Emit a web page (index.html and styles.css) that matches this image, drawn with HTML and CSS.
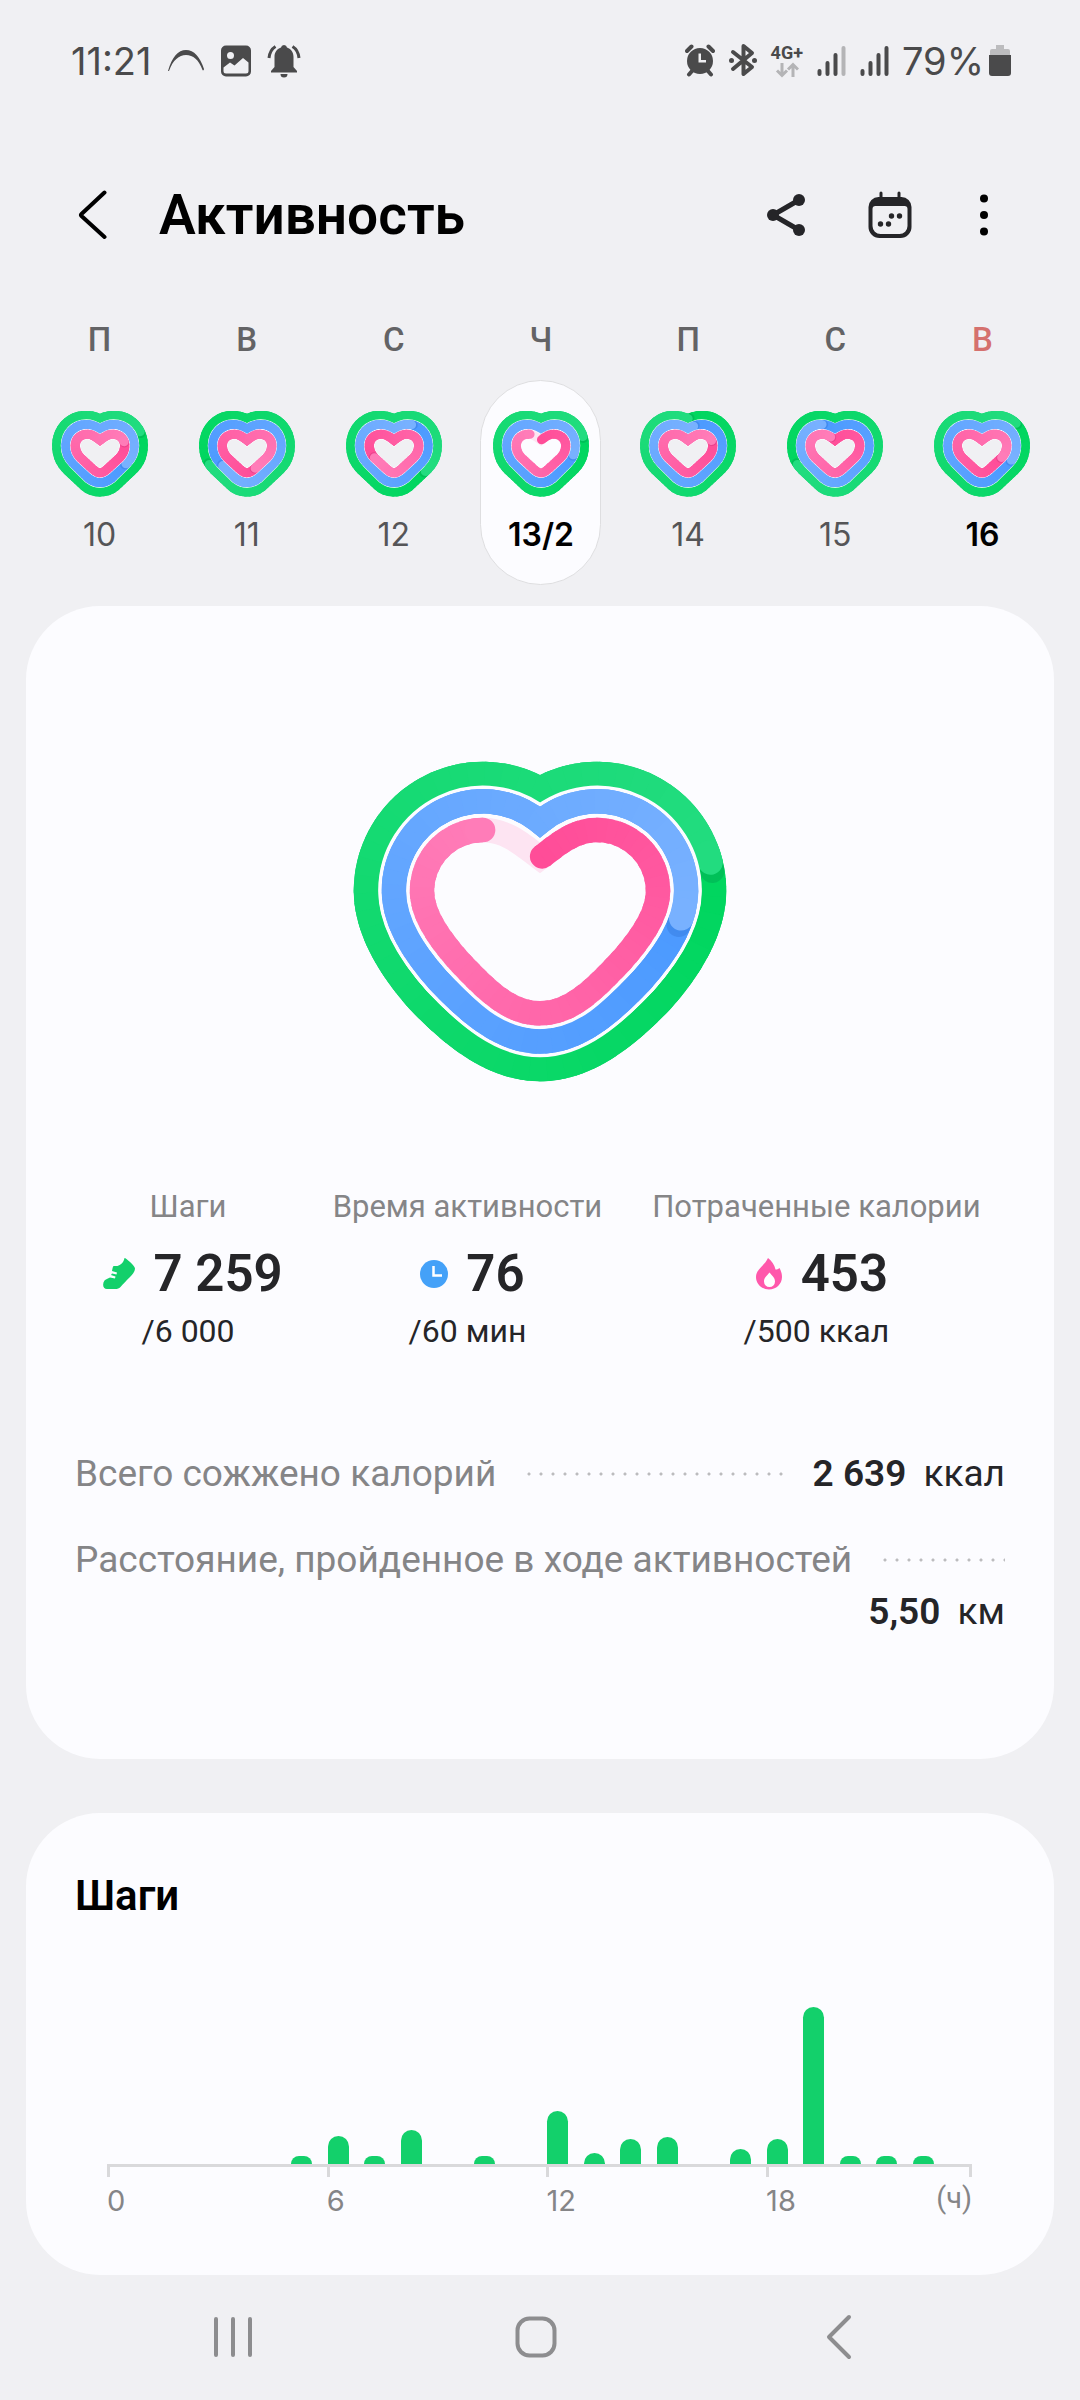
FILE: index.html
```html
<!DOCTYPE html>
<html lang="ru">
<head>
<meta charset="utf-8">
<meta name="viewport" content="width=device-width, initial-scale=1">
<title>Активность</title>
<link rel="stylesheet" href="styles.css">
</head>
<body>

<div class="status">
  <div class="status-group status-left">
    <time class="status-text">11:21</time>
    <svg width="38" height="36" viewBox="0 0 38 36" aria-hidden="true"><path d="M1 28C5 14 11 7 19 7s14 7 18 19c0 1-1 2-1.500 1C32 17 26 12 19 12S6 17 2 28z"/></svg>
    <svg width="32" height="36" viewBox="0 0 32 36" aria-hidden="true"><path fill-rule="evenodd" d="M6 2.500h20a5 5 0 0 1 5 5v21a5 5 0 0 1-5 5H6a5 5 0 0 1-5-5v-21a5 5 0 0 1 5-5zM10.500 9a3.500 3.500 0 1 0 0 7 3.500 3.500 0 0 0 0-7zM28.500 19.500 23 15l-8.500 7.500-4.500-3-6.500 5V28q0 2.500 2.500 2.500h20q2.500 0 2.500-2.500z"/></svg>
    <svg class="bell" width="34" height="36" viewBox="0 0 34 36" aria-hidden="true"><path d="M17 2a3 3 0 0 0-3 2.500C9.500 6 7.500 9.500 7.500 14v10L4 28v1.500h26V28l-3.500-4V14c0-4.500-2-8-6.500-9.500A3 3 0 0 0 17 2zM13.500 31h7a3.500 3.500 0 0 1-7 0z"/><path class="line" d="M8.500 3.500C4.500 6 2.500 10 2 15M25.500 3.500c4 2.500 6 6.500 6.500 11.500"/></svg>
  </div>
  <div class="status-group status-right">
    <svg width="30" height="36" viewBox="0 0 30 36" aria-hidden="true"><path class="line" d="M2 8l4.500-4.500M28 8l-4.500-4.500M7 28l-3 3.500M23 28l3 3.500"/><path fill-rule="evenodd" d="M15 5a13 13 0 1 1 0 26 13 13 0 0 1 0-26zM13.500 10.500v9h7.500v-2.500h-5v-6.500z"/></svg>
    <svg width="30" height="36" viewBox="0 0 30 36" aria-hidden="true"><path class="bt" d="M5 9l19 15-8.500 7V3L24 10 5 26"/><circle cx="3.500" cy="17.500" r="2.500"/><circle cx="26.500" cy="17.500" r="2.500"/></svg>
    <div class="net"><span>4G+</span>
      <svg width="24" height="16" viewBox="0 0 24 16" aria-hidden="true"><path d="M7 1v12M2 8.500l5 5 5-5M18 15V3M13 7.500l5-5 5 5"/></svg>
    </div>
    <svg width="30" height="36" viewBox="0 0 30 36" aria-hidden="true"><path class="sig" d="M3.500 28v3M11.500 20v11M19.500 12v19"/><path class="sig weak" d="M27.500 5v26"/></svg>
    <svg width="30" height="36" viewBox="0 0 30 36" aria-hidden="true"><path class="sig" d="M3.500 28v3M11.500 20v11M19.500 12v19M27.500 5v26"/></svg>
    <span class="status-text pct">79%</span>
    <svg width="22" height="36" viewBox="0 0 22 36" aria-hidden="true"><path class="batt" d="M7 2h8v4h4a2 2 0 0 1 2 2v4H1V8a2 2 0 0 1 2-2h4z"/><path d="M0 12h22v18a3 3 0 0 1-3 3H3a3 3 0 0 1-3-3z"/></svg>
  </div>
</div>

<header class="bar">
  <button class="icon-btn" type="button" aria-label="Назад"><svg width="30" height="50" viewBox="0 0 30 50"><path class="chev" d="M26.500 2.500 3.500 24q-1 1 0 2L26.500 47"/></svg></button>
  <h1>Активность</h1>
  <button class="icon-btn" type="button" aria-label="Поделиться"><svg width="40" height="46" viewBox="0 0 40 46"><path class="share" d="M33 8 7 23l26 15"/><circle cx="33" cy="8" r="6"/><circle cx="7" cy="23" r="6"/><circle cx="33" cy="38" r="6"/></svg></button>
  <button class="icon-btn" type="button" aria-label="Календарь"><svg width="44" height="48" viewBox="0 0 44 48"><path fill-rule="evenodd" d="M11.500 2a1.500 1.500 0 0 1 3 0v4h15V2a1.500 1.500 0 0 1 3 0v4h1a10 10 0 0 1 10 10v20a11 11 0 0 1-11 11h-21a11 11 0 0 1-11-11V16a10 10 0 0 1 10-10h1zM4.500 18v17a8 8 0 0 0 8 8h19a8 8 0 0 0 8-8V18a3 3 0 0 0-3-3h-29a3 3 0 0 0-3 3z"/><circle cx="23.500" cy="25" r="2.700"/><circle cx="31.500" cy="25" r="2.700"/><circle cx="12.500" cy="33" r="2.700"/><circle cx="20.500" cy="33" r="2.700"/></svg></button>
  <button class="icon-btn more" type="button" aria-label="Ещё"><svg width="12" height="48" viewBox="0 0 12 48"><circle cx="6" cy="7.500" r="4"/><circle cx="6" cy="24" r="4"/><circle cx="6" cy="40.500" r="4"/></svg></button>
</header>

<nav class="week" aria-label="Дни недели">
  <div class="day"><span class="dow">П</span><button class="pill" type="button"><svg class="heart" data-rings="18,33.5,20" viewBox="0 0 280 256" preserveAspectRatio="none"></svg><span class="date">10</span></button></div>
  <div class="day"><span class="dow">В</span><button class="pill" type="button"><svg class="heart" data-rings="68.5,65,43" viewBox="0 0 280 256" preserveAspectRatio="none"></svg><span class="date">11</span></button></div>
  <div class="day"><span class="dow">С</span><button class="pill" type="button"><svg class="heart" data-rings="35,9,67.5" viewBox="0 0 280 256" preserveAspectRatio="none"></svg><span class="date">12</span></button></div>
  <div class="day"><span class="dow">Ч</span><button class="pill selected" type="button" aria-current="date"><svg class="heart" data-rings="20,28,91" data-partial viewBox="0 0 280 256" preserveAspectRatio="none"></svg><span class="date strong">13/2</span></button></div>
  <div class="day"><span class="dow">П</span><button class="pill" type="button"><svg class="heart" data-rings="0,3,19" viewBox="0 0 280 256" preserveAspectRatio="none"></svg><span class="date">14</span></button></div>
  <div class="day"><span class="dow">С</span><button class="pill" type="button"><svg class="heart" data-rings="68.5,93,96" viewBox="0 0 280 256" preserveAspectRatio="none"></svg><span class="date">15</span></button></div>
  <div class="day"><span class="dow sunday">В</span><button class="pill" type="button"><svg class="heart" data-rings="14,31,32" viewBox="0 0 280 256" preserveAspectRatio="none"></svg><span class="date strong">16</span></button></div>
</nav>

<main>
  <section class="card summary">
    <svg class="big-heart" data-rings="21,27,90.5" data-partial viewBox="0 0 420 360" role="img" aria-label="Цели дня"></svg>

    <div class="stats">
      <div class="stat">
        <span class="stat-name">Шаги</span>
        <div class="stat-value">
          <svg width="32" height="32" viewBox="0 0 32 32" aria-hidden="true"><path fill="#13d06b" d="M21.500 0c1.500 0 10.500 8 10.500 10.500 0 2.500-2 5.500-5 8.500-4 4-7 7-9.500 10-1.500 1.500-3 2-5.500 2H4c-4 0-5-5-2.500-8.500 1-1.200 3.500-1.700 5.500-3l5 1 .500-2-4.500-1.500 1-1.500 4.500 1 .500-2-5-1.500c.500-2 .500-4 1.500-5h4c3-1 6-3 7-8z"/></svg>
          <strong>7 259</strong>
        </div>
        <span class="stat-goal">/6 000</span>
      </div>
      <div class="stat">
        <span class="stat-name">Время активности</span>
        <div class="stat-value">
          <svg width="28" height="28" viewBox="0 0 28 28" aria-hidden="true"><circle cx="14" cy="14" r="14" fill="#44a1f8"/><path d="M13.500 6v9.500H22" fill="none" stroke="#fff" stroke-width="2.500"/></svg>
          <strong>76</strong>
        </div>
        <span class="stat-goal">/60 мин</span>
      </div>
      <div class="stat">
        <span class="stat-name">Потраченные калории</span>
        <div class="stat-value">
          <svg width="28" height="32" viewBox="0 0 28 32" aria-hidden="true"><path fill="#ff58ab" d="M13 0c3.500 3 6.500 6.500 7.500 11.500 1.500 0 2.500-.500 4-1.500 1.500 3 2.500 5.500 2.500 9 0 7-6 12.500-13 12.500S1 26 1 19C1 11 9.500 8 13 0z"/><path fill="#fff" d="M14.500 14.500c3 3.500 5.500 5.500 5.500 9a5.500 5.500 0 0 1-11 0c0-3.500 2.500-5.500 5.500-9z"/></svg>
          <strong>453</strong>
        </div>
        <span class="stat-goal">/500 ккал</span>
      </div>
    </div>

    <div class="rows">
      <div class="row"><span class="row-name">Всего сожжено калорий</span><span class="dots"></span><span class="row-value"><strong>2 639</strong> ккал</span></div>
      <div class="row"><span class="row-name">Расстояние, пройденное в ходе активностей</span><span class="dots"></span><span class="row-value"><strong>5,50</strong> км</span></div>
    </div>
  </section>

  <section class="card steps">
    <h2>Шаги</h2>
    <div class="bars">
      <i></i><i></i><i></i><i></i><i></i><i style="height:8px"></i>
      <i style="height:28px"></i><i style="height:8px"></i><i style="height:34px"></i><i></i><i style="height:8px"></i><i></i>
      <i style="height:53px"></i><i style="height:11px"></i><i style="height:25px"></i><i style="height:27px"></i><i></i><i style="height:15px"></i>
      <i style="height:25px"></i><i style="height:157px"></i><i style="height:8px"></i><i style="height:8px"></i><i style="height:8px"></i><i></i>
    </div>
    <div class="axis"><span>0</span><span>6</span><span>12</span><span>18</span><span class="unit">(ч)</span></div>
  </section>
</main>

<nav class="sysnav" aria-label="Системная навигация">
  <button type="button" aria-label="Недавние"><svg width="42" height="44" viewBox="0 0 42 44"><path d="M4 4v36M21 4v36M38 4v36"/></svg></button>
  <button type="button" aria-label="Домой"><svg width="44" height="44" viewBox="0 0 44 44"><rect x="3.500" y="3.500" width="37" height="37" rx="12"/></svg></button>
  <button type="button" aria-label="Назад"><svg width="28" height="48" viewBox="0 0 28 48"><path d="M24 4 4 24l20 20"/></svg></button>
</nav>

<script src="rings.js"></script>
</body>
</html>
```
FILE: styles.css
```css
* { box-sizing: border-box; }

body {
  margin: 0;
  min-height: 100vh;
  display: flex;
  flex-direction: column;
  background: #f0f0f3;
  color: #252528;
  font-family: Roboto, "Noto Sans", sans-serif;
}

button {
  border: 0;
  padding: 0;
  background: none;
  font: inherit;
  color: inherit;
}

svg { display: block; flex: none; }
h1, h2 { margin: 0; color: #000; }
strong { font-weight: 600; }

/* Status bar */
.status {
  height: 122px;
  padding: 0 69px 0 71px;
  display: flex;
  align-items: center;
  justify-content: space-between;
  color: #4a4a4b;
  fill: currentColor;
}
.status-group { display: flex; align-items: center; }
.status-left { gap: 15px; }
.status-right { gap: 13px; }
.status-text { font: 400 38px/44px Inter, Roboto, sans-serif; }
.pct { margin-right: -8px; }
.line { fill: none; stroke: currentColor; stroke-width: 4; stroke-linecap: round; }
.bell .line { stroke-width: 3; stroke-linecap: butt; }
.bt { fill: none; stroke: currentColor; stroke-width: 4; stroke-linecap: round; stroke-linejoin: round; }
.sig { fill: none; stroke: currentColor; stroke-width: 4; stroke-linecap: round; }
.weak { stroke: #b4b4b6; }
.batt { fill: #bcbcbe; }
.net { display: flex; flex-direction: column; align-items: center; font-size: 18px; line-height: 18px; font-weight: 700; }
.net path { fill: none; stroke: #b4b4b6; stroke-width: 3; }

/* Title bar */
.bar {
  height: 186px;
  padding: 0 90px 0 78px;
  display: flex;
  align-items: center;
  fill: #252528;
}
.bar h1 { flex: 1; margin-left: 51px; font-size: 55px; line-height: 64px; font-weight: 600; }
.chev { fill: none; stroke: #000; stroke-width: 4; stroke-linecap: round; }
.share { fill: none; stroke: #252528; stroke-width: 5; }
.icon-btn + .icon-btn { margin-left: 62px; }
.icon-btn + .more { margin-left: 66px; fill: #000; }

/* Week strip */
.week {
  display: grid;
  grid-template-columns: repeat(7, 1fr);
  padding: 12px 24px 21px 26px;
}
.day { display: flex; flex-direction: column; align-items: center; gap: 20px; }
.dow { font-size: 33px; line-height: 40px; font-weight: 500; color: #636365; }
.sunday { color: #d5716e; }
.pill {
  width: 121px;
  padding: 30px 0 29px;
  border: 1px solid transparent;
  border-radius: 61px;
  display: flex;
  flex-direction: column;
  align-items: center;
  gap: 18px;
}
.pill.selected { background: #fcfcff; border-color: #dedee0; }
.heart { width: 96px; height: 86px; }
.date { font: 400 32px/40px Inter, Roboto, sans-serif; color: #555557; }
.date.strong { font-weight: 600; color: #000; }

/* Cards */
main { display: flex; flex-direction: column; gap: 54px; padding: 0 26px; }
.card { background: #fcfcff; border-radius: 74px; }
.summary { padding: 135px 49px 121px; display: flex; flex-direction: column; }
.big-heart { width: 420px; align-self: center; }

.stats { margin-top: 86px; padding-right: 6px; display: flex; justify-content: center; gap: 50px; }
.stat { display: flex; flex-direction: column; align-items: center; }
.stat-name { font-size: 31px; line-height: 40px; color: #858587; }
.stat-value { margin: 17px 0 7px; padding-left: 10px; display: flex; align-items: center; gap: 18px; font-size: 51px; line-height: 60px; }
.stat-goal { font-size: 32px; line-height: 40px; }

.rows { margin-top: 97px; display: flex; flex-direction: column; gap: 34px; }
.row { display: flex; flex-wrap: wrap; align-items: center; column-gap: 27px; font-size: 37px; line-height: 52px; }
.row-name { color: #858587; }
.row-value { margin-left: auto; white-space: pre; }
.row-value strong { margin-right: 8px; }
.dots {
  flex: 1;
  min-width: 120px;
  height: 4px;
  background: radial-gradient(circle, #bcbcbe 1px, transparent 2px) 0 0 / 12px 4px repeat-x;
}

/* Hourly chart */
.steps { padding: 57px 82px 54px 81px; }
.steps h2 { margin-left: -32px; font-size: 42px; line-height: 52px; font-weight: 600; }
.bars {
  height: 242px;
  display: flex;
  align-items: flex-end;
  justify-content: space-between;
  padding: 0 1px;
}
.bars i { width: 21px; border-radius: 11px 11px 0 0; background: #13d06b; }
.axis {
  display: grid;
  grid-template-columns: repeat(3, 25.4%) 1fr auto;
  border-top: 3px solid #d9d9db;
  font: 400 29px/40px Inter, Roboto, sans-serif;
  color: #858587;
}
.axis span { padding-top: 14px; background: linear-gradient(#d9d9db, #d9d9db) 0 0 / 3px 10px no-repeat; }
.axis .unit { background-position: 100% 0; padding-top: 11px; font-family: Roboto, sans-serif; }

/* System navigation */
.sysnav {
  margin-top: auto;
  height: 126px;
  padding: 0 90px 2px 82px;
  display: grid;
  grid-template-columns: repeat(3, 1fr);
  place-items: center;
  fill: none;
  stroke: #8d8d8f;
  stroke-width: 4;
  stroke-linecap: round;
  stroke-linejoin: round;
}
```
FILE: rings.js
```javascript
// Ring outlines start at the bottom tip and run clockwise, so 50% is the notch.
const LARGE = {
  width: 24.5,
  gap: 7,
  rings: [
    'M210 328C164 328 124 297 88 259C62 230 36 190 36 150A117 117 0 0 1 210 47.800A117 117 0 0 1 384 150C384 190 358 230 332 259C296 297 256 328 210 328Z',
    'M210 300.500C172 300.500 139 272 108 239C83 211 64 180 64 150A89 89 0 0 1 210 81A89 89 0 0 1 356 150C356 180 337 211 312 239C281 272 248 300.500 210 300.500Z',
    'M210 272.300C180 272.300 158 251 128 219C107 195 92 172 92 150A61 61 0 0 1 153 89C177 89 194 105 210 117C226 105 243 89 267 89A61 61 0 0 1 328 150C328 172 313 195 292 219C262 251 240 272.300 210 272.300Z'
  ]
};
const SMALL = {
  width: 27,
  gap: 4,
  rings: [
    'M140 241C126 241 110 238 96 226L44 176C24 156 14 134 14 103C14 53 50 13 98 13C114 13 128 17 140 23C152 17 166 13 182 13C230 13 266 53 266 103C266 134 256 156 236 176L184 226C170 238 154 241 140 241Z',
    'M140 213C130 213 119 210 108 201L63 156C49 142 41 126 41 103C41 68 66 40 100 40C114 40 128 46 140 54C152 46 166 40 180 40C214 40 239 68 239 103C239 126 231 142 217 156L172 201C161 210 150 213 140 213Z',
    'M140 184C134 184 128 181 120 174L84 140C74 130 68 118 68 103C68 84 82 69 104 69C118 69 130 79 140 87C150 79 162 69 176 69C198 69 212 84 212 103C212 118 206 130 196 140L160 174C152 181 146 184 140 184Z'
  ]
};
const COLORS = [
  { from: [0, 214, 94], to: [34, 220, 127], shade: '#00994c', track: '#d5f7e4' },
  { from: [76, 154, 255], to: [120, 177, 255], shade: '#2f6fd0', track: '#dcebff' },
  { from: [255, 77, 152], to: [255, 124, 184], shade: '#c42f78', track: '#fde4f2' }
];
const STEPS = 60;

function stroke(svg, d, width, color, start, length, cap) {
  const p = document.createElementNS('http://www.w3.org/2000/svg', 'path');
  p.setAttribute('d', d);
  p.setAttribute('fill', 'none');
  p.setAttribute('stroke', color);
  p.setAttribute('stroke-width', width);
  if (length !== undefined) {
    p.setAttribute('pathLength', 100);
    p.setAttribute('stroke-dasharray', length + ' ' + (100 - length));
    p.setAttribute('stroke-dashoffset', -(((start % 100) + 100) % 100));
    p.setAttribute('stroke-linecap', cap || 'butt');
  }
  svg.appendChild(p);
  return p;
}

document.querySelectorAll('svg[data-rings]').forEach(svg => {
  const set = svg.classList.contains('big-heart') ? LARGE : SMALL;
  const ends = svg.dataset.rings.split(',').map(Number);
  const partial = 'partial' in svg.dataset;

  ends.forEach((end, r) => {
    const d = set.rings[r];
    const c = COLORS[r];
    const open = partial && r === 2;
    const start = open ? 50.4 : end + 50;
    const span = open ? end - 0.4 : 100;
    const mix = t => 'rgb(' + c.from.map((v, k) => Math.round(v + (c.to[k] - v) * t)).join(',') + ')';

    if (r > 0) stroke(svg, d, set.width + set.gap, '#fcfcff');
    stroke(svg, d, set.width, open ? c.track : mix(0.5));
    if (open) stroke(svg, d, set.width, mix(0), start, 0.1, 'round');

    const step = span / STEPS;
    for (let i = 0; i < STEPS; i++) {
      stroke(svg, d, set.width, mix(i / (STEPS - 1)), start + i * step, step + (i < STEPS - 1 ? 0.8 : 0));
    }
    if (!open) {
      stroke(svg, d, set.width, c.shade, start + 0.7, 0.1, 'round').setAttribute('opacity', '0.35');
    }
    stroke(svg, d, set.width, mix(1), start + span - 1, 1, 'round');
  });
});
```
